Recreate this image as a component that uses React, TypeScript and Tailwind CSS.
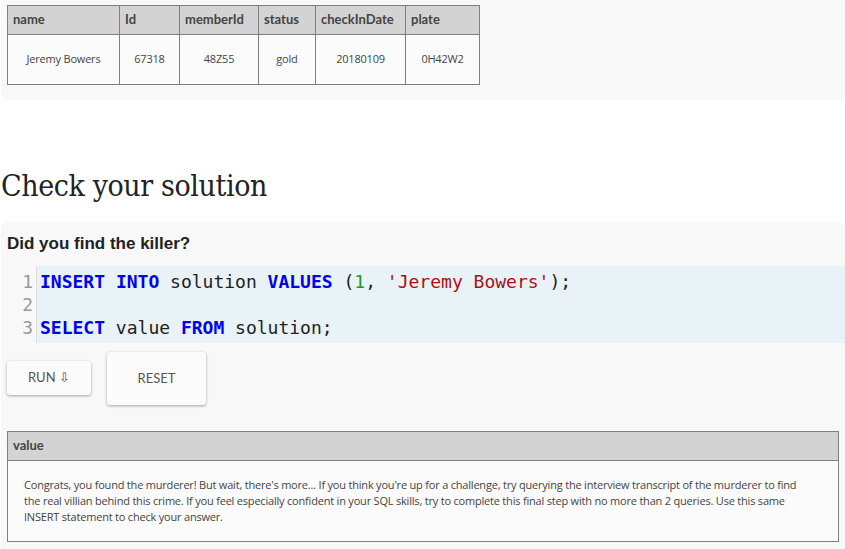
import React from 'react';

const rows = [
  { name: 'Jeremy Bowers', id: '67318', memberId: '48Z55', status: 'gold', checkInDate: '20180109', plate: '0H42W2' },
];

const cols: { key: keyof (typeof rows)[0]; label: string; w: string }[] = [
  { key: 'name', label: 'name', w: 'w-[112px]' },
  { key: 'id', label: 'Id', w: 'w-[60px]' },
  { key: 'memberId', label: 'memberId', w: 'w-[79px]' },
  { key: 'status', label: 'status', w: 'w-[57px]' },
  { key: 'checkInDate', label: 'checkInDate', w: 'w-[90px]' },
  { key: 'plate', label: 'plate', w: 'w-[74px]' },
];

const headFont = { fontFamily: 'Lato, "Noto Sans", sans-serif' };
const bodyFont = { fontFamily: '"Open Sans", "Noto Sans", sans-serif' };

function Kw({ children }: { children: React.ReactNode }) {
  return <span className="font-bold text-[#0000ee]">{children}</span>;
}

export default function App() {
  return (
    <div className="w-[845px] h-[549px] overflow-hidden bg-white text-[#333]">
      {/* previous query result */}
      <div className="bg-[#f8f8f8] rounded-b-md ml-px pt-[5px] pb-[15px] pl-[6px]">
        <table className="border-collapse text-[#444]">
          <thead>
            <tr className="bg-[#d3d3d3]">
              {cols.map((c) => (
                <th
                  key={c.key}
                  className={`${c.w} h-[29px] border border-[#808080] text-left px-[5px] text-[13px] font-bold text-[#444]`}
                  style={headFont}
                >
                  {c.label}
                </th>
              ))}
            </tr>
          </thead>
          <tbody>
            {rows.map((r) => (
              <tr key={r.id} className="bg-[#fbfbfb]">
                {cols.map((c) => (
                  <td key={c.key} className="h-[50px] border border-[#808080] text-center text-[11px] tracking-[-0.2px]" style={bodyFont}>
                    {r[c.key]}
                  </td>
                ))}
              </tr>
            ))}
          </tbody>
        </table>
      </div>

      <div className="h-[122px] flex items-end pb-[16px]">
        <h2
          className="text-[30px] leading-[40px] tracking-[-0.4px] text-[#222] ml-px"
          style={{ fontFamily: '"DejaVu Serif Condensed", "DejaVu Serif", serif' }}
        >
          Check your solution
        </h2>
      </div>

      <div className="bg-[#f8f8f8] rounded-t-md ml-px pl-[6px] pt-[10px] pb-[10px] h-[400px]">
        <h3 className="text-[17px] font-bold text-[#222] leading-[24px]" style={{ fontFamily: '"Liberation Sans", Arial, sans-serif' }}>
          Did you find the killer?
        </h3>

        <div
          className="mt-[10px] flex text-[18px] leading-[23px] text-[#222]"
          style={{ fontFamily: '"DejaVu Sans Mono", monospace' }}
        >
          <div className="w-[30px] border-r border-[#ddd] py-[4px] pr-[3px] text-right text-[#999]">
            <div>1</div>
            <div>2</div>
            <div>3</div>
          </div>
          <div className="flex-1 bg-[#e9f2f6] py-[4px] pl-[3px] whitespace-pre">
            <div>
              <Kw>INSERT</Kw> <Kw>INTO</Kw> solution <Kw>VALUES</Kw> (<span className="text-[#229922]">1</span>,{' '}
              <span className="text-[#aa1111]">'Jeremy Bowers'</span>);
            </div>
            <div> </div>
            <div>
              <Kw>SELECT</Kw> value <Kw>FROM</Kw> solution;
            </div>
          </div>
        </div>

        <div className="flex items-start gap-[16px] mt-[9px]" style={headFont}>
          <button className="mt-[9px] w-[84px] h-[34px] bg-[#fbfbfb] rounded-[3px] shadow-[0_1px_3px_rgba(0,0,0,0.35)] text-[13px] text-[#555]">
            RUN ⇩
          </button>
          <button className="w-[99px] h-[53px] bg-[#fbfbfb] rounded-[3px] shadow-[0_1px_3px_rgba(0,0,0,0.35)] text-[13px] text-[#555]">
            RESET
          </button>
        </div>

        <table className="mt-[26px] w-[832px] border-collapse text-[#444]">
          <thead>
            <tr className="bg-[#d3d3d3]">
              <th className="h-[29px] border border-[#808080] text-left px-[5px] text-[13px] font-bold" style={headFont}>
                value
              </th>
            </tr>
          </thead>
          <tbody>
            <tr className="bg-[#fbfbfb]">
              <td
                className="border border-[#808080] pl-[16px] pr-[32px] pt-[16px] pb-[16px] text-[11px] leading-[16px] tracking-[-0.2px] text-left"
                style={bodyFont}
              >
                Congrats, you found the murderer! But wait, there's more... If you think you're up for a challenge, try querying the
                interview transcript of the murderer to find the real villian behind this crime. If you feel especially confident in
                your SQL skills, try to complete this final step with no more than 2 queries. Use this same INSERT statement to check
                your answer.
              </td>
            </tr>
          </tbody>
        </table>
      </div>
    </div>
  );
}
